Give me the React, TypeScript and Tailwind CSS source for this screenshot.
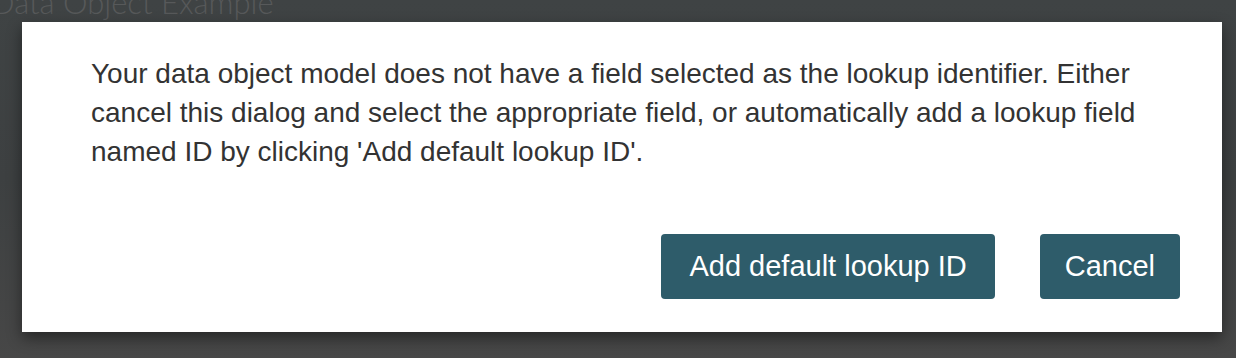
export default function App() {
  return (
    <div className="relative h-[358px] w-full overflow-hidden bg-[#3e4142] bg-gradient-to-b from-[#3f4344] via-[#3d4041] to-[#474747] font-[family-name:'Liberation_Sans',Arial,sans-serif]">
      <h1 className="-ml-[9px] -mt-[16px] font-[family-name:'Lato',sans-serif] text-[31px] font-light leading-[36px] text-[#57595a]">
        Data Object Example
      </h1>

      {/* modal */}
      <div className="absolute left-[22px] top-[22px] flex h-[310px] w-[1200px] flex-col justify-between bg-white shadow-[0_6px_14px_rgba(0,0,0,0.45)]">
        <p className="px-[69px] pt-[32px] text-[28px] leading-[39px] text-[#333333]">
          Your data object model does not have a field selected as the lookup identifier. Either
          cancel this dialog and select the appropriate field, or automatically add a lookup field
          named ID by clicking 'Add default lookup ID'.
        </p>
        <div className="flex justify-end gap-[45px] pb-[33px] pr-[42px]">
          <button className="flex h-[65px] items-center rounded-[4px] bg-[#2e5c6a] px-[28px] text-[29px] text-white">
            Add default lookup ID
          </button>
          <button className="flex h-[65px] items-center rounded-[4px] bg-[#2e5c6a] px-[25px] text-[29px] text-white">
            Cancel
          </button>
        </div>
      </div>
    </div>
  );
}
